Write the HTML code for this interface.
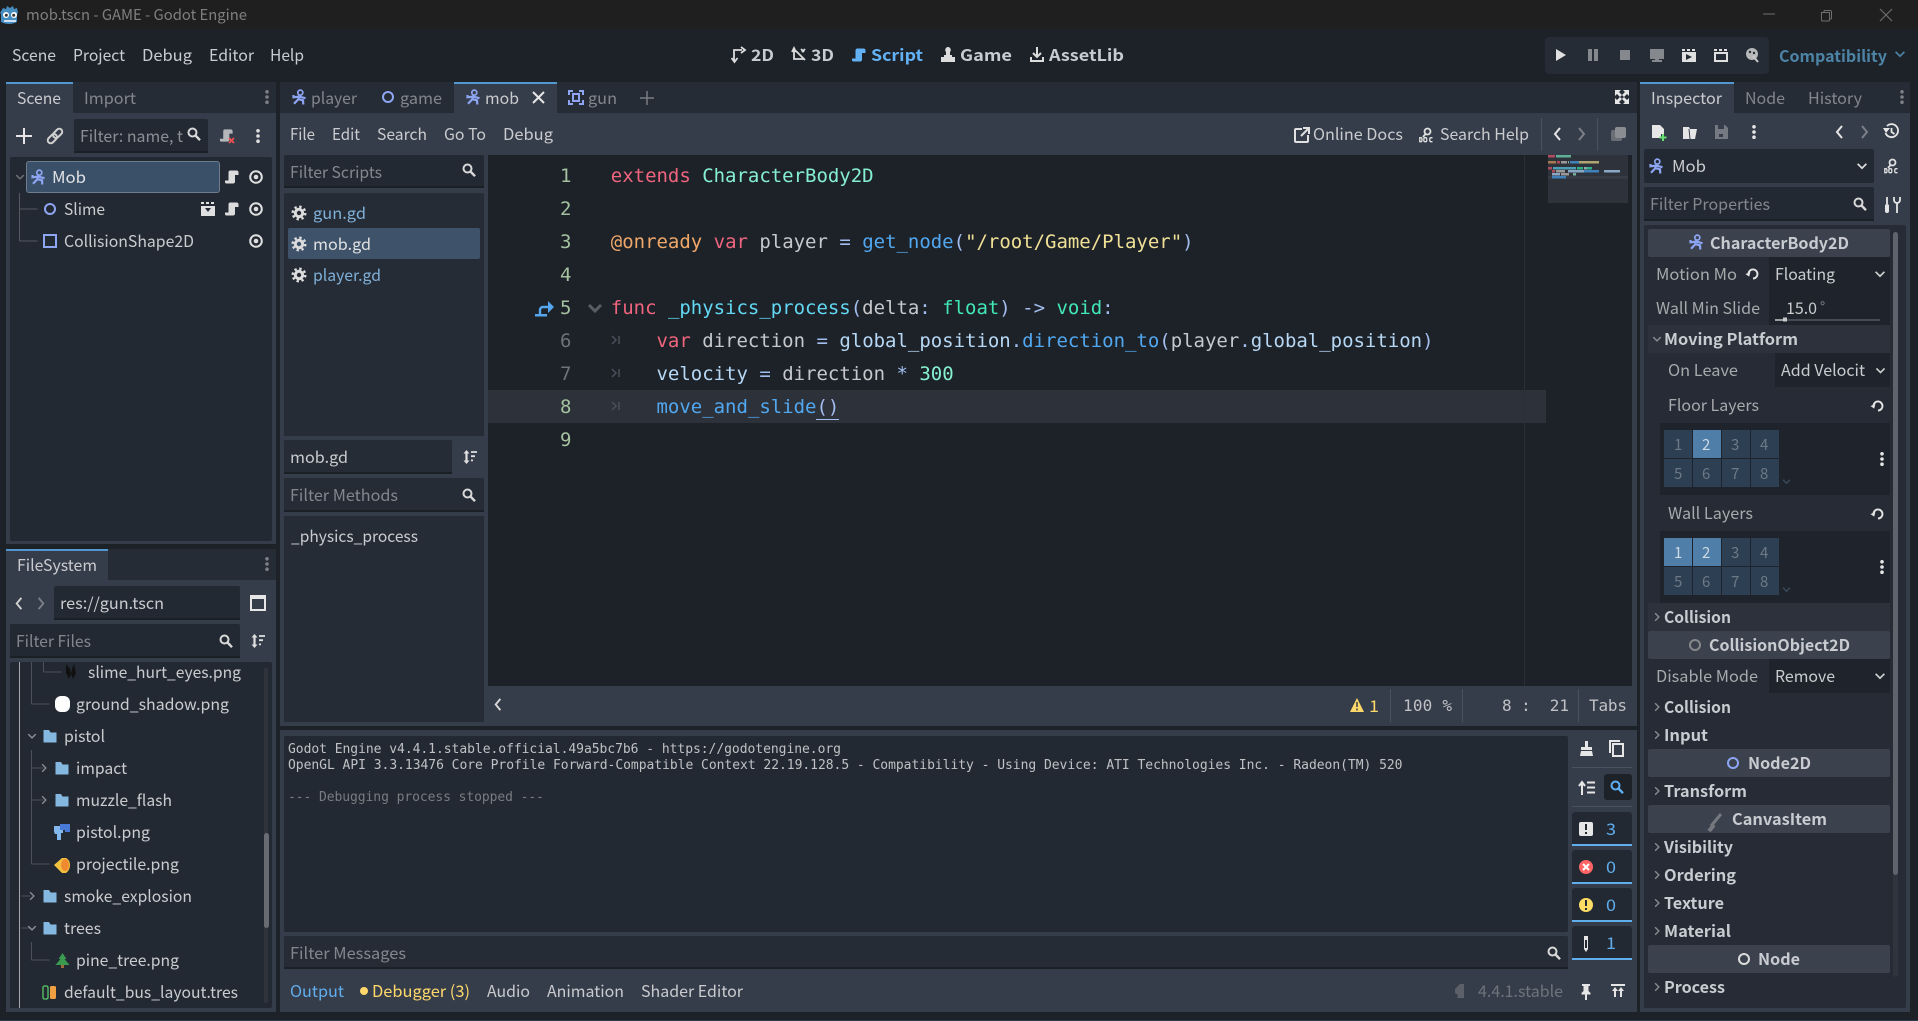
<!DOCTYPE html>
<html><head><meta charset="utf-8"><title>mob.tscn - GAME - Godot Engine</title>
<style>
html,body{margin:0;padding:0;background:#1d2229;overflow:hidden}
svg{display:block}
text{font-family:"Noto Sans CJK JP","Liberation Sans",sans-serif;font-size:16px;fill:#c9cbce;white-space:pre}
.d{fill:#83878d}.w{fill:#e0e1e3}
.b{font-weight:700;fill:#c8cbd0}
.m{font-family:"DejaVu Sans Mono","Liberation Mono",monospace}
.c{font-family:"DejaVu Sans Mono","Liberation Mono",monospace;font-size:19px;letter-spacing:-.015px}
.o{font-family:"DejaVu Sans Mono","Liberation Mono",monospace;font-size:13px;fill:#bfc1c4}
.n{font-family:"DejaVu Sans Mono","Liberation Mono",monospace;font-size:19px;fill:#a5c2a0}
.k{fill:#f0657d}.t{fill:#85f0cf}.y{fill:#42e8b4}.s{fill:#a3bdee}.f{fill:#52a8f0}.g{fill:#f0e096}.p{fill:#c6c8cb}.v{fill:#b6d8f5}.u{fill:#62d8f2}
.l{font-size:15px;fill:#6d7986}.la{font-size:15px;fill:#d0dbe6}
</style></head><body>
<svg xmlns="http://www.w3.org/2000/svg" width="1918" height="1021" viewBox="0 0 1918 1021">
<defs>
<symbol id="ch" viewBox="0 0 16 16"><circle cx="9.300" cy="3.600" r="2.500" fill="none" stroke="#8da5f3" stroke-width="1.700"/><path d="M8 6.500L7.300 10.200 3 14.700M7.300 10.200L12 11.300 12.300 15.500M2.500 6v2.300L8 7.600 14.500 9.200" fill="none" stroke="#8da5f3" stroke-width="2.200"/></symbol>
<symbol id="sc" viewBox="0 0 16 16"><path fill="currentColor" d="M6 1.500h6.500a2 2 0 0 1 2 2V6h-3.500v6.500a2 2 0 0 1-2 2H2.500A1.500 1.500 0 0 1 1 13v-1.500h3.500V3.500A2 2 0 0 1 6 1.500z"/></symbol>
<symbol id="ey" viewBox="0 0 16 16"><circle cx="8" cy="8" r="5.800" fill="none" stroke="#e0e0e0" stroke-width="2"/><circle cx="8" cy="8" r="2.300" fill="#e0e0e0"/></symbol>
<symbol id="no" viewBox="0 0 16 16"><circle cx="8" cy="8" r="5" fill="none" stroke="currentColor" stroke-width="2"/></symbol>
<symbol id="gr" viewBox="0 0 16 16"><circle cx="8" cy="8" r="6.300" fill="none" stroke="#dcdcdc" stroke-width="2.400" stroke-dasharray="2.400 2.550"/><circle cx="8" cy="8" r="3.700" fill="none" stroke="#dcdcdc" stroke-width="3"/></symbol>
<symbol id="se" viewBox="0 0 16 16"><circle cx="6.500" cy="6.500" r="4" fill="none" stroke="#d8d8d8" stroke-width="2"/><path d="M9.500 9.500l4.500 4.700" stroke="#d8d8d8" stroke-width="2.400"/></symbol>
<symbol id="sb" viewBox="0 0 16 16"><circle cx="6.500" cy="6.500" r="4" fill="none" stroke="#5fb0f2" stroke-width="2"/><path d="M9.500 9.500l4.500 4.700" stroke="#5fb0f2" stroke-width="2.400"/></symbol>
<symbol id="dt" viewBox="0 0 16 16"><circle cx="8" cy="2.800" r="1.800" fill="currentColor"/><circle cx="8" cy="8" r="1.800" fill="currentColor"/><circle cx="8" cy="13.200" r="1.800" fill="currentColor"/></symbol>
<symbol id="cd" viewBox="0 0 16 16"><path d="M3 5.500l5 5 5-5" fill="none" stroke="currentColor" stroke-width="2"/></symbol>
<symbol id="cr" viewBox="0 0 16 16"><path d="M5.500 3l5 5-5 5" fill="none" stroke="currentColor" stroke-width="1.800"/></symbol>
<symbol id="al" viewBox="0 0 16 16"><path d="M10 2L5 8l5 6" fill="none" stroke="currentColor" stroke-width="2"/></symbol>
<symbol id="ar" viewBox="0 0 16 16"><path d="M6 2l5 6-5 6" fill="none" stroke="currentColor" stroke-width="2"/></symbol>
<symbol id="fo" viewBox="0 0 16 16"><path fill="#84b8e0" d="M1.500 2h5.500l1.500 2.500h6V14.500h-13z"/></symbol>
<symbol id="re" viewBox="0 0 16 16"><path d="M3.700 8.500A4.800 4.800 0 1 1 8.500 13.300" fill="none" stroke="#e6e6e6" stroke-width="2"/><path fill="#e6e6e6" d="M.8 7.500h5.600L3.600 11.500z" transform="rotate(-20 3.600 9)"/></symbol>
<symbol id="so" viewBox="0 0 16 16"><path fill="#e0e0e0" d="M4.500 1L7.500 4.500H5.600v7h1.900L4.500 15 1.500 11.500h1.900v-7H1.500z"/><path stroke="#e0e0e0" stroke-width="1.800" d="M9 3h6M9 7.200h4M9 11.400h2"/></symbol>
<symbol id="dc" viewBox="0 0 16 16"><circle cx="8.500" cy="4.500" r="3" fill="none" stroke="#e0e0e0" stroke-width="1.800"/><path d="M6.500 7L4 10" stroke="#e0e0e0" stroke-width="1.800"/><path fill="none" stroke="#e0e0e0" stroke-width="1.300" d="M.8 10.700h1.200q1 0 1 2t-1 2H.8zM5.800 10.700h1q1 0 1 2t-1 2h-1q-1 0-1-2t1-2zM13.500 10.700h-1.500q-1.300 0-1.300 2t1.300 2h1.500"/></symbol>
</defs>

<!-- window -->
<rect width="1918" height="1021" fill="#1d2229"/>
<rect width="1918" height="29" fill="#1f1f1f"/>
<rect y="1020" width="1918" height="1" fill="#2d3b4f"/>
<g><path fill="#478cbf" d="M3 8l3 1 1-3 3 2 3-2 1 3 3-1 1 5-1 1v8q-8 4-16 0v-8l-1-1z"/><circle cx="6" cy="15" r="3" fill="#fff"/><circle cx="14" cy="15" r="3" fill="#fff"/><circle cx="6.300" cy="15.300" r="1.500" fill="#333"/><circle cx="13.700" cy="15.300" r="1.500" fill="#333"/><path d="M4 21h12" stroke="#fff" stroke-width="1.500"/></g>
<text x="26" y="20" style="font-size:15px;fill:#7f7f7f" textLength="221" lengthAdjust="spacingAndGlyphs">mob.tscn - GAME - Godot Engine</text>
<path d="M1763 14h12" stroke="#6f6f6f" stroke-width="1"/>
<path d="M1821.500 12.500h8v7.500a1 1 0 0 1-1 1h-6a1 1 0 0 1-1-1zM1824 12.500v-1a1 1 0 0 1 1-1h5a1.500 1.500 0 0 1 1.500 1.500v6a1 1 0 0 1-1 1h-1" fill="none" stroke="#6f6f6f"/>
<path d="M1880 9l12 12M1892 9l-12 12" stroke="#6f6f6f" stroke-width="1.100"/>

<!-- menu -->
<text x="12" y="61" textLength="44" lengthAdjust="spacingAndGlyphs">Scene</text>
<text x="73" y="61" textLength="52" lengthAdjust="spacingAndGlyphs">Project</text>
<text x="142" y="61" textLength="50" lengthAdjust="spacingAndGlyphs">Debug</text>
<text x="209" y="61" textLength="45" lengthAdjust="spacingAndGlyphs">Editor</text>
<text x="270" y="61" textLength="34" lengthAdjust="spacingAndGlyphs">Help</text>

<!-- main screens -->
<path d="M734 62V50h3M731.500 58l3 4 3-4M737 50l5 0M741 47l4 3-4 3" fill="none" stroke="#dcdcdc" stroke-width="1.800"/>
<text class="b" x="751" y="61" textLength="23" lengthAdjust="spacingAndGlyphs">2D</text>
<path d="M794 49v10h10M792 52l2-4 2 4M805 60l-9-9M801 49l3 3M805 49l-3 3" fill="none" stroke="#dcdcdc" stroke-width="1.800"/>
<text class="b" x="811" y="61" textLength="23" lengthAdjust="spacingAndGlyphs">3D</text>
<use href="#sc" x="851" y="47" width="16" height="16" color="#63b1f5"/>
<text class="b" x="871" y="61" textLength="52" lengthAdjust="spacingAndGlyphs" style="fill:#63b1f5">Script</text>
<path fill="#dcdcdc" d="M948 47a3 3 0 0 1 2 5v3h2v2h3v5h-14v-5h3v-2h2v-3a3 3 0 0 1 2-5z"/>
<text class="b" x="960" y="61" textLength="52" lengthAdjust="spacingAndGlyphs">Game</text>
<path d="M1037 47v10M1033 53l4 4 4-4M1031 57v4h12v-4" fill="none" stroke="#dcdcdc" stroke-width="2"/>
<text class="b" x="1049" y="61" textLength="75" lengthAdjust="spacingAndGlyphs">AssetLib</text>

<!-- run bar -->
<rect x="1545" y="37" width="224" height="37" rx="4" fill="#262c36"/>
<path fill="#e0e0e0" d="M1556 49l10 6-10 6z"/>
<path fill="#85888d" d="M1588 49h4v12h-4zM1594 49h4v12h-4z"/>
<rect x="1620" y="50" width="10" height="10" fill="#85888d"/>
<path fill="#85888d" d="M1650 49h14v10h-5v1h3v2h-10v-2h3v-1h-5z"/>
<path fill="#e0e0e0" d="M1682 52h14v10h-14zM1682 49h3v2h-3zM1687 49h3v2h-3zM1692 49h3v2h-3z"/><path fill="#262c36" d="M1686 54l6 3-6 3z"/>
<path fill="none" stroke="#e0e0e0" stroke-width="2" d="M1715 53h12v8h-12z"/><path fill="#e0e0e0" d="M1714 49h3v2h-3zM1719 49h3v2h-3zM1724 49h3v2h-3z"/>
<circle cx="1752" cy="54" r="6" fill="#b6b8ba"/><path d="M1753 56l5 6" stroke="#c8c8c8" stroke-width="2"/><circle cx="1750" cy="52" r="1.200" fill="#262c36"/><circle cx="1754" cy="53" r="1.200" fill="#262c36"/>
<text class="b" x="1779" y="62" textLength="108" lengthAdjust="spacingAndGlyphs" style="fill:#4d84a6">Compatibility</text>
<use href="#cd" x="1893" y="47" width="14" height="14" color="#4d84a6"/>

<!-- left dock scene -->
<rect x="6" y="82" width="270" height="31" fill="#262c36"/>
<rect x="6" y="82" width="67" height="31" fill="#363d4a"/>
<rect x="6" y="82" width="67" height="2" fill="#5397d0"/>
<text x="17" y="104" textLength="44" lengthAdjust="spacingAndGlyphs">Scene</text>
<text class="d" x="84" y="104" textLength="52" lengthAdjust="spacingAndGlyphs">Import</text>
<use href="#dt" x="259" y="89" width="16" height="16" color="#7c7f85"/>
<rect x="6" y="113" width="270" height="431" fill="#363d4a"/>
<path d="M24 128v16M16 136h16" stroke="#e6e6e6" stroke-width="2"/>
<g fill="none" stroke="#d0d0d0" stroke-width="2" transform="rotate(-45 55 136)"><rect x="46" y="133" width="10.500" height="6" rx="3"/><rect x="53.500" y="133" width="10.500" height="6" rx="3"/></g>
<rect x="74" y="119" width="134" height="34" rx="2" fill="#232933"/><rect x="74" y="151" width="134" height="2" fill="#1b2027"/>
<text class="d" x="80" y="142" textLength="103" lengthAdjust="spacingAndGlyphs" style="fill:#8b8f95">Filter: name, t</text>
<use href="#se" x="186" y="126" width="16" height="16"/>
<use href="#sc" x="219" y="128" width="15" height="15" color="#b4b6b9"/><path d="M229 138l5 5M234 138l-5 5" stroke="#f05050" stroke-width="1.800"/>
<use href="#dt" x="250" y="128" width="16" height="16" color="#e0e0e0"/>
<rect x="10" y="157" width="262" height="384" rx="2" fill="#232933"/>
<rect x="26.500" y="161.500" width="193" height="31" rx="2.500" fill="#3a5068" stroke="#6d7d8f"/>
<use href="#cd" x="14" y="171" width="12" height="12" color="#6f7377"/>
<use href="#ch" x="30" y="169" width="16" height="16"/>
<text class="w" x="52" y="183" textLength="34" lengthAdjust="spacingAndGlyphs">Mob</text>
<use href="#sc" x="224" y="169" width="16" height="16" color="#dcdcdc"/><use href="#ey" x="248" y="169" width="16" height="16"/>
<path d="M19.500 193v48M19.500 209h18M19.500 241h18" stroke="#55595f" fill="none"/>
<use href="#no" x="42" y="201" width="16" height="16" color="#8da5f3"/>
<text x="64" y="215" textLength="41" lengthAdjust="spacingAndGlyphs">Slime</text>
<path fill="#e0e0e0" d="M201 206h14v10h-14zM201 202h3v2h-3zM206 202h3v2h-3zM211 202h3v2h-3z"/><path fill="#232933" d="M205 208h6l-3 4z"/>
<use href="#sc" x="224" y="201" width="16" height="16" color="#dcdcdc"/><use href="#ey" x="248" y="201" width="16" height="16"/>
<rect x="44" y="235" width="12" height="12" fill="none" stroke="#8da5f3" stroke-width="2"/>
<text x="64" y="247" textLength="130" lengthAdjust="spacingAndGlyphs">CollisionShape2D</text>
<use href="#ey" x="248" y="233" width="16" height="16"/>

<!-- filesystem -->
<rect x="6" y="549" width="270" height="31" fill="#262c36"/>
<rect x="6" y="549" width="102" height="31" fill="#363d4a"/>
<rect x="6" y="549" width="102" height="2" fill="#5397d0"/>
<text x="17" y="571" textLength="80" lengthAdjust="spacingAndGlyphs">FileSystem</text>
<use href="#dt" x="259" y="556" width="16" height="16" color="#7c7f85"/>
<rect x="6" y="580" width="270" height="432" fill="#363d4a"/>
<use href="#al" x="12" y="596" width="15" height="15" color="#d0d0d0"/>
<use href="#ar" x="33" y="596" width="15" height="15" color="#7c7f85"/>
<rect x="54" y="586" width="186" height="34" rx="2" fill="#232933"/><rect x="54" y="618" width="186" height="2" fill="#1b2027"/>
<text x="60" y="609" textLength="104" lengthAdjust="spacingAndGlyphs">res://gun.tscn</text>
<rect x="251" y="596" width="14" height="14" fill="none" stroke="#e6e6e6" stroke-width="2"/><path d="M251 596h14v3h-14z" fill="#e6e6e6"/>
<rect x="10" y="624" width="230" height="34" rx="2" fill="#232933"/><rect x="10" y="656" width="230" height="2" fill="#1b2027"/>
<text class="d" x="16" y="647" textLength="75" lengthAdjust="spacingAndGlyphs">Filter Files</text>
<use href="#se" x="218" y="633" width="16" height="16"/>
<use href="#so" x="250" y="633" width="16" height="16"/>
<rect x="10" y="662" width="262" height="346" rx="2" fill="#232933"/>
<path d="M19.500 662v346" stroke="#a5a8ac"/>
<path d="M31.500 662v42M31.500 704h18M31.500 750v114M31.500 768h12M31.500 800h12M31.500 864h18M31.500 942v18M31.500 960h18M43.500 662v10M43.500 672h18M21 896h9M21 928h9" stroke="#4d5157" fill="none"/>
<path fill="#111" d="M66 664l4 5 1 5-2 5-3-6zM74 664l-2 5-1 5 2 5 3-6z"/>
<text x="88" y="678" textLength="153" lengthAdjust="spacingAndGlyphs">slime_hurt_eyes.png</text>
<g transform="translate(0 -1)">
<rect x="55" y="697" width="15" height="16" rx="6" fill="#fff"/>
<text x="76" y="711" textLength="153" lengthAdjust="spacingAndGlyphs">ground_shadow.png</text>
<use href="#cd" x="26" y="731" width="12" height="12" color="#8a8d91"/><use href="#fo" x="42" y="729" width="16" height="16"/>
<text x="64" y="743" textLength="41" lengthAdjust="spacingAndGlyphs">pistol</text>
<use href="#cr" x="38" y="763" width="12" height="12" color="#8a8d91"/><use href="#fo" x="54" y="761" width="16" height="16"/>
<text x="76" y="775" textLength="51" lengthAdjust="spacingAndGlyphs">impact</text>
<use href="#cr" x="38" y="795" width="12" height="12" color="#8a8d91"/><use href="#fo" x="54" y="793" width="16" height="16"/>
<text x="76" y="807" textLength="96" lengthAdjust="spacingAndGlyphs">muzzle_flash</text>
<path fill="#82b7ee" d="M54 827h9v7h-2v7h-4v-6h-2l-1-2z"/><path fill="#4a7ad8" d="M60 825h10v8h-5v-2h-5z"/>
<text x="76" y="839" textLength="74" lengthAdjust="spacingAndGlyphs">pistol.png</text>
<path fill="#f2c23e" d="M54 866l8-7h4q4 2 4 7t-4 8h-4z"/><ellipse cx="65" cy="866" rx="4" ry="6" fill="#f08a30"/>
<text x="76" y="871" textLength="103" lengthAdjust="spacingAndGlyphs">projectile.png</text>
<use href="#cr" x="26" y="891" width="12" height="12" color="#8a8d91"/><use href="#fo" x="42" y="889" width="16" height="16"/>
<text x="64" y="903" textLength="128" lengthAdjust="spacingAndGlyphs">smoke_explosion</text>
<use href="#cd" x="26" y="923" width="12" height="12" color="#8a8d91"/><use href="#fo" x="42" y="921" width="16" height="16"/>
<text x="64" y="935" textLength="37" lengthAdjust="spacingAndGlyphs">trees</text>
<path fill="#3a9a50" d="M62.500 954l4 6h-2l5 6h-14l5-6h-2z"/><rect x="61" y="966" width="3" height="3" fill="#a06a3a"/>
<text x="76" y="967" textLength="103" lengthAdjust="spacingAndGlyphs">pine_tree.png</text>
</g>
<rect x="43" y="986" width="5" height="13" rx="1.500" fill="none" stroke="#5ac86a" stroke-width="1.300"/><rect x="50" y="986" width="6" height="13" rx="1.500" fill="#f0a040"/>
<text x="64" y="998" textLength="174" lengthAdjust="spacingAndGlyphs">default_bus_layout.tres</text>
<rect x="264" y="668" width="4" height="335" rx="2" fill="#2e333c"/><rect x="264" y="833" width="5" height="95" rx="2.500" fill="#686c72"/>

<!-- centre tabs -->
<rect x="280" y="82" width="1357" height="31" fill="#262c36"/>
<use href="#ch" x="291" y="89" width="16" height="16"/>
<text class="d" x="311" y="104" textLength="46" lengthAdjust="spacingAndGlyphs">player</text>
<use href="#no" x="380" y="89" width="16" height="16" color="#8da5f3"/>
<text class="d" x="400" y="104" textLength="42" lengthAdjust="spacingAndGlyphs">game</text>
<rect x="454" y="82" width="103" height="31" fill="#363d4a"/><rect x="454" y="82" width="103" height="2" fill="#5397d0"/>
<use href="#ch" x="465" y="89" width="16" height="16"/>
<text x="485" y="104" textLength="34" lengthAdjust="spacingAndGlyphs">mob</text>
<path d="M533 92l11 11M544 92l-11 11" stroke="#e6e6e6" stroke-width="2"/>
<path d="M569 95v-4h4M579 91h4v4M583 100v4h-4M573 104h-4v-4" fill="none" stroke="#8da5f3" stroke-width="2"/><rect x="573" y="94" width="6" height="7" fill="none" stroke="#8da5f3" stroke-width="2"/>
<text class="d" x="588" y="104" textLength="29" lengthAdjust="spacingAndGlyphs">gun</text>
<path d="M647 91v14M640 98h14" stroke="#7a7d82" stroke-width="1.500"/>
<path fill="#e6e6e6" d="M1615 90h6l-2 2 3 3-2 2-3-3-2 2zM1629 90v6l-2-2-3 3-2-2 3-3-2-2zM1615 104v-6l2 2 3-3 2 2-3 3 2 2zM1629 104h-6l2-2-3-3 2-2 3 3 2-2z"/>

<!-- toolbar -->
<rect x="280" y="113" width="1357" height="42" fill="#363d4a"/>
<text x="290" y="140" textLength="25" lengthAdjust="spacingAndGlyphs">File</text>
<text x="332" y="140" textLength="28" lengthAdjust="spacingAndGlyphs">Edit</text>
<text x="377" y="140" textLength="50" lengthAdjust="spacingAndGlyphs">Search</text>
<text x="444" y="140" textLength="42" lengthAdjust="spacingAndGlyphs">Go To</text>
<text x="503" y="140" textLength="50" lengthAdjust="spacingAndGlyphs">Debug</text>
<path d="M1302 129h-6a1 1 0 0 0-1 1v11a1 1 0 0 0 1 1h11a1 1 0 0 0 1-1v-6M1301 136l7-7M1303 128h6v6" fill="none" stroke="#e0e0e0" stroke-width="2"/>
<text x="1313" y="140" textLength="90" lengthAdjust="spacingAndGlyphs">Online Docs</text>
<use href="#dc" x="1419" y="127" width="16" height="16"/>
<text x="1440" y="140" textLength="89" lengthAdjust="spacingAndGlyphs">Search Help</text>
<path d="M1541.500 118v33M1597.500 118v33" stroke="#4b525e"/>
<use href="#al" x="1550" y="126" width="16" height="16" color="#e6e6e6"/>
<use href="#ar" x="1573" y="126" width="16" height="16" color="#7c7f85"/>
<rect x="1611" y="130" width="11" height="11" rx="2" fill="#6a6e75"/><rect x="1615" y="127" width="11" height="11" rx="2" fill="#8a8d92"/>

<!-- script panel -->
<rect x="280" y="155" width="208" height="571" fill="#363d4a"/>
<rect x="284" y="155" width="200" height="33" rx="2" fill="#232933"/><rect x="284" y="186" width="200" height="2" fill="#1b2027"/>
<text class="d" x="290" y="178" textLength="92" lengthAdjust="spacingAndGlyphs">Filter Scripts</text>
<use href="#se" x="461" y="162" width="16" height="16"/>
<rect x="284" y="193" width="200" height="243" rx="2" fill="#262c36"/>
<rect x="288" y="228" width="192" height="31" rx="2" fill="#3e5369"/>
<use href="#gr" x="291" y="205" width="16" height="16"/>
<text x="313" y="219" textLength="53" lengthAdjust="spacingAndGlyphs" style="fill:#7fb0d8">gun.gd</text>
<use href="#gr" x="291" y="236" width="16" height="16"/>
<text class="w" x="313" y="250" textLength="58" lengthAdjust="spacingAndGlyphs">mob.gd</text>
<use href="#gr" x="291" y="267" width="16" height="16"/>
<text x="313" y="281" textLength="68" lengthAdjust="spacingAndGlyphs" style="fill:#7fb0d8">player.gd</text>
<rect x="284" y="440" width="168" height="34" rx="2" fill="#262c36"/><rect x="284" y="472" width="168" height="2" fill="#1b2027"/>
<text x="290" y="463" textLength="58" lengthAdjust="spacingAndGlyphs">mob.gd</text>
<use href="#so" x="462" y="449" width="16" height="16"/>
<rect x="284" y="478" width="200" height="34" rx="2" fill="#262c36"/><rect x="284" y="510" width="200" height="2" fill="#1b2027"/>
<text class="d" x="290" y="501" textLength="108" lengthAdjust="spacingAndGlyphs">Filter Methods</text>
<use href="#se" x="461" y="487" width="16" height="16"/>
<rect x="284" y="516" width="200" height="206" rx="2" fill="#262c36"/>
<text x="291" y="542" textLength="127" lengthAdjust="spacingAndGlyphs">_physics_process</text>

<!-- code -->
<rect x="488" y="155" width="1144" height="531" fill="#1d2229"/>
<rect x="1632" y="155" width="5" height="531" fill="#363d4a"/>
<rect x="488" y="390" width="1058" height="33" fill="#2d3139"/>
<path d="M1524.500 155v531" stroke="#2a2f37"/>
<rect x="1548" y="155" width="80" height="48" fill="#2e323a"/>
<g>
<rect x="1548" y="155" width="7" height="2.500" fill="#b04a5c"/><rect x="1556" y="155" width="15" height="2.500" fill="#5fae96"/>
<rect x="1548" y="161" width="8" height="2.500" fill="#a87a50"/><rect x="1557" y="161" width="3" height="2.500" fill="#b04a5c"/><rect x="1561" y="161" width="6" height="2.500" fill="#999"/><rect x="1568" y="161" width="1" height="2.500" fill="#8aa"/><rect x="1570" y="161" width="9" height="2.500" fill="#3f81bb"/><rect x="1579" y="161" width="20" height="2.500" fill="#b0a570"/>
<rect x="1548" y="167" width="4" height="2.500" fill="#b04a5c"/><rect x="1553" y="167" width="23" height="2.500" fill="#4c9fb5"/><rect x="1577" y="167" width="6" height="2.500" fill="#30b088"/><rect x="1584" y="167" width="3" height="2.500" fill="#8aa"/><rect x="1587" y="167" width="5" height="2.500" fill="#30b088"/>
<rect x="1552" y="170" width="3" height="2.500" fill="#b04a5c"/><rect x="1556" y="170" width="9" height="2.500" fill="#999"/><rect x="1568" y="170" width="16" height="2.500" fill="#8aa8c6"/><rect x="1584" y="170" width="15" height="2.500" fill="#3f81bb"/><rect x="1604" y="170" width="16" height="2.500" fill="#8aa8c6"/>
<rect x="1552" y="173" width="8" height="2.500" fill="#8aa8c6"/><rect x="1561" y="173" width="8" height="2.500" fill="#999"/><rect x="1573" y="173" width="3" height="2.500" fill="#74b09c"/>
<rect x="1548" y="176" width="80" height="2.500" fill="#383c44"/><rect x="1552" y="176" width="14" height="2.500" fill="#3f81bb"/>
</g>
<text class="n" x="560" y="182">1</text><text class="n" x="560" y="215">2</text><text class="n" x="560" y="248">3</text><text class="n" x="560" y="281">4</text><text class="n" x="560" y="314">5</text>
<text class="n" x="560" y="347" style="fill:#6e7175">6</text><text class="n" x="560" y="380" style="fill:#6e7175">7</text><text class="n" x="560" y="413">8</text><text class="n" x="560" y="446">9</text>
<text class="c" x="610.800" y="182"><tspan class="k">extends</tspan> <tspan class="t">CharacterBody2D</tspan></text>
<text class="c" x="610.800" y="248"><tspan style="fill:#f0a869">@onready</tspan> <tspan class="k">var</tspan> <tspan class="p">player</tspan> <tspan class="s">=</tspan> <tspan class="f">get_node</tspan><tspan class="s">(</tspan><tspan class="g">"/root/Game/Player"</tspan><tspan class="s">)</tspan></text>
<text class="c" x="610.800" y="314"><tspan class="k">func</tspan> <tspan class="u">_physics_process</tspan><tspan class="s">(</tspan><tspan class="p">delta</tspan><tspan class="s">:</tspan> <tspan class="y">float</tspan><tspan class="s">)</tspan> <tspan class="s">-&gt;</tspan> <tspan class="y">void</tspan><tspan class="s">:</tspan></text>
<text class="c" x="656.500" y="347"><tspan class="k">var</tspan> <tspan class="p">direction</tspan> <tspan class="s">=</tspan> <tspan class="v">global_position</tspan><tspan class="s">.</tspan><tspan class="f">direction_to</tspan><tspan class="s">(</tspan><tspan class="p">player</tspan><tspan class="s">.</tspan><tspan class="v">global_position</tspan><tspan class="s">)</tspan></text>
<text class="c" x="656.500" y="380"><tspan class="v">velocity</tspan> <tspan class="s">=</tspan> <tspan class="p">direction</tspan> <tspan class="s">*</tspan> <tspan class="t">300</tspan></text>
<text class="c" x="656.500" y="413"><tspan class="f">move_and_slide</tspan><tspan class="s">()</tspan></text>
<path d="M816 419.500h23" stroke="#a3bdee"/>
<path d="M612 336l4 4-4 4M619 336v8M612 369l4 4-4 4M619 369v8M612 402l4 4-4 4M619 402v8" fill="none" stroke="#4a505b" stroke-width="1.500"/>
<path fill="none" stroke="#55a6ee" stroke-width="2.400" d="M540 316v-6a3 3 0 0 1 3-3h7"/><path fill="#55a6ee" d="M548 301l6 6-6 6zM535 314h12v2.500h-12z"/>
<path d="M589 305l6 6 6-6" fill="none" stroke="#5a5d62" stroke-width="3"/>

<!-- status -->
<rect x="488" y="686" width="1149" height="40" fill="#363d4a"/>
<use href="#al" x="491" y="697" width="15" height="15" color="#d8d8d8"/>
<path fill="#ffd86b" d="M1357 698l7 14h-14z"/><path d="M1357 702v5M1357 708.500v2" stroke="#363d4a" stroke-width="1.500"/>
<text x="1369" y="712" textLength="10" lengthAdjust="spacingAndGlyphs" style="fill:#ffd86b">1</text>
<path d="M1390.500 689v33M1462.500 689v33M1578.500 689v33" stroke="#4b525e"/>
<text class="m" x="1403" y="711" textLength="49" style="font-size:16px;fill:#bfc1c4">100 %</text>
<text class="m" x="1502" y="711" textLength="67" style="font-size:16px;fill:#bfc1c4">8 :  21</text>
<text class="m" x="1589" y="711" textLength="38" style="font-size:16px;fill:#bfc1c4">Tabs</text>

<!-- debug panel -->
<rect x="280" y="730" width="1357" height="282" fill="#363d4a"/>
<rect x="284" y="736" width="1284" height="196" rx="2" fill="#232933"/>
<text class="o" x="288" y="753" textLength="553">Godot Engine v4.4.1.stable.official.49a5bc7b6 - https://godotengine.org</text>
<text class="o" x="288" y="769" textLength="1114.500">OpenGL API 3.3.13476 Core Profile Forward-Compatible Context 22.19.128.5 - Compatibility - Using Device: ATI Technologies Inc. - Radeon(TM) 520</text>
<text class="o" x="288" y="801" textLength="256" style="fill:#797c80">--- Debugging process stopped ---</text>
<rect x="284" y="936" width="1284" height="33" rx="2" fill="#262c36"/><rect x="284" y="967" width="1284" height="2" fill="#1b2027"/>
<text class="d" x="290" y="959" textLength="116" lengthAdjust="spacingAndGlyphs">Filter Messages</text>
<use href="#se" x="1546" y="945" width="16" height="16"/>
<path fill="#e6e6e6" d="M1585 741h3v6h-3zM1581 747h11v3h-11zM1581 751h11l1 5h-13z"/>
<path d="M1613 744h10v12h-10zM1610 753v-12h10" fill="none" stroke="#e6e6e6" stroke-width="2"/>
<path d="M1572 767.500h60M1572 806.500h60" stroke="#4b525e"/>
<path d="M1582 783v12M1579 786l3-4 3 4M1587 782.500h8M1587 787.500h8M1587 792.500h8" stroke="#e6e6e6" stroke-width="2" fill="none"/>
<rect x="1604" y="774" width="28" height="26" rx="3" fill="#1d2229"/><use href="#sb" x="1609" y="779" width="16" height="16"/>
<g>
<rect x="1572" y="812" width="60" height="34" rx="3" fill="#232933"/><rect x="1572" y="844" width="60" height="2" fill="#60aeee"/>
<rect x="1572" y="850" width="60" height="34" rx="3" fill="#232933"/><rect x="1572" y="882" width="60" height="2" fill="#60aeee"/>
<rect x="1572" y="888" width="60" height="34" rx="3" fill="#232933"/><rect x="1572" y="920" width="60" height="2" fill="#60aeee"/>
<rect x="1572" y="926" width="60" height="34" rx="3" fill="#232933"/><rect x="1572" y="958" width="60" height="2" fill="#60aeee"/>
</g>
<rect x="1579" y="822" width="14" height="14" rx="2" fill="#e6e6e6"/><path d="M1586 824v6M1586 832v2" stroke="#232933" stroke-width="2"/>
<circle cx="1586" cy="867" r="7" fill="#ff6464"/><path d="M1583 864l6 6M1589 864l-6 6" stroke="#fff" stroke-width="2"/>
<circle cx="1586" cy="905" r="7" fill="#ffdd65"/><path d="M1586 900v6M1586 908v2" stroke="#232933" stroke-width="2"/>
<path fill="#e6e6e6" d="M1584 936h4v13l-2 3-2-3z"/><rect x="1585" y="940" width="2" height="8" fill="#232933"/>
<text x="1606" y="835" textLength="10" lengthAdjust="spacingAndGlyphs" style="fill:#60aeee">3</text>
<text x="1606" y="873" textLength="10" lengthAdjust="spacingAndGlyphs" style="fill:#60aeee">0</text>
<text x="1606" y="911" textLength="10" lengthAdjust="spacingAndGlyphs" style="fill:#60aeee">0</text>
<text x="1606" y="949" textLength="10" lengthAdjust="spacingAndGlyphs" style="fill:#60aeee">1</text>
<text x="290" y="997" textLength="54" lengthAdjust="spacingAndGlyphs" style="fill:#60aeee">Output</text>
<circle cx="364" cy="991" r="4" fill="#ffd86b"/>
<text x="372" y="997" textLength="98" lengthAdjust="spacingAndGlyphs" style="fill:#ffd86b">Debugger (3)</text>
<text x="487" y="997" textLength="43" lengthAdjust="spacingAndGlyphs">Audio</text>
<text x="547" y="997" textLength="77" lengthAdjust="spacingAndGlyphs">Animation</text>
<text x="641" y="997" textLength="102" lengthAdjust="spacingAndGlyphs">Shader Editor</text>
<path fill="#5c6068" d="M1455 989l5-5h4v14h-7l1-3-3-2z"/>
<text class="d" x="1478" y="997" textLength="85" lengthAdjust="spacingAndGlyphs" style="fill:#6f747b">4.4.1.stable</text>
<path fill="#e6e6e6" d="M1582 984h8v2h-1.500v5l2 2v1.500h-3.500V1000h-2v-5.500h-3.500V993l2-2v-5H1582z"/>
<path fill="#e6e6e6" d="M1611 984h14v2h-14zM1615 987l3 4h-2v6h-2v-6h-2zM1621 987l3 4h-2v6h-2v-6h-2z"/>

<!-- inspector -->
<rect x="1640" y="82" width="270" height="31" fill="#262c36"/>
<rect x="1640" y="82" width="94" height="31" fill="#363d4a"/><rect x="1640" y="82" width="94" height="2" fill="#5397d0"/>
<text x="1651" y="104" textLength="71" lengthAdjust="spacingAndGlyphs">Inspector</text>
<text class="d" x="1745" y="104" textLength="40" lengthAdjust="spacingAndGlyphs">Node</text>
<text class="d" x="1808" y="104" textLength="54" lengthAdjust="spacingAndGlyphs">History</text>
<use href="#dt" x="1894" y="89" width="16" height="16" color="#7c7f85"/>
<rect x="1640" y="113" width="270" height="899" fill="#363d4a"/>
<path fill="#e6e6e6" d="M1652 125h8l4 4v5h-3v4h-9z"/><path d="M1663 134v7M1659.500 137.500h7" stroke="#66e070" stroke-width="2"/>
<path fill="#e6e6e6" d="M1683 127h6l1 2v10h-7zM1690 129h7l-2 10h-5z"/><path d="M1689 129l1 10" stroke="#363d4a"/>
<path fill="#757a82" d="M1715 125h10l3 3v11h-13z"/><rect x="1718" y="125" width="6" height="4" fill="#363d4a"/><rect x="1719" y="134" width="4" height="3" fill="#363d4a"/>
<use href="#dt" x="1746" y="124" width="16" height="16" color="#e6e6e6"/>
<use href="#al" x="1832" y="124" width="16" height="16" color="#e6e6e6"/>
<use href="#ar" x="1856" y="124" width="16" height="16" color="#7c7f85"/>
<path d="M1887 126a6.500 6.500 0 1 1-1.500 7M1891.500 128v4l3 2" fill="none" stroke="#e6e6e6" stroke-width="1.800"/><path fill="#e6e6e6" d="M1883 128h7l-4 5z"/>
<rect x="1644" y="149" width="230" height="34" rx="2" fill="#232933"/>
<use href="#ch" x="1648" y="158" width="16" height="16"/>
<text x="1672" y="172" textLength="34" lengthAdjust="spacingAndGlyphs">Mob</text>
<use href="#cd" x="1855" y="159" width="14" height="14" color="#e0e0e0"/>
<use href="#dc" x="1884" y="158" width="16" height="16"/>
<rect x="1644" y="187" width="230" height="34" rx="2" fill="#232933"/><rect x="1644" y="219" width="230" height="2" fill="#1b2027"/>
<text class="d" x="1650" y="210" textLength="120" lengthAdjust="spacingAndGlyphs">Filter Properties</text>
<use href="#se" x="1852" y="196" width="16" height="16"/>
<path d="M1887 197v7M1897 203v10M1894 197v3a3 3 0 0 0 6 0v-3" stroke="#e6e6e6" stroke-width="1.800" fill="none"/><rect x="1885" y="204" width="4" height="9" rx="2" fill="#e6e6e6"/>
<rect x="1644" y="225" width="262" height="783" rx="2" fill="#262b35"/>
<rect x="1893" y="232" width="5" height="745" rx="2.500" fill="#2f343d"/><rect x="1893" y="232" width="5" height="643" rx="2.500" fill="#5f636b"/>

<rect x="1648" y="229" width="242" height="28" rx="2" fill="#3c424d"/>
<use href="#ch" x="1688" y="234" width="16" height="16"/>
<text class="b" x="1710" y="249" textLength="139" lengthAdjust="spacingAndGlyphs">CharacterBody2D</text>
<text class="d" x="1656" y="280" textLength="81" lengthAdjust="spacingAndGlyphs" style="fill:#a7a9ac">Motion Mo</text>
<use href="#re" x="1745" y="266" width="15" height="15"/>
<rect x="1769" y="257" width="121" height="68" fill="#1f242c"/>
<text x="1775" y="280" textLength="60" lengthAdjust="spacingAndGlyphs">Floating</text>
<use href="#cd" x="1873" y="267" width="14" height="14" color="#d0d0d0"/>
<text class="d" x="1656" y="314" textLength="104" lengthAdjust="spacingAndGlyphs" style="fill:#a7a9ac">Wall Min Slide</text>
<text x="1786" y="314" textLength="31" lengthAdjust="spacingAndGlyphs">15.0</text>
<text class="d" x="1820" y="312" style="font-size:14px">°</text>
<rect x="1775" y="319" width="105" height="2" fill="#464b53"/><rect x="1775" y="319" width="10" height="2" fill="#9a9da2"/><rect x="1783" y="317.500" width="4" height="4" fill="#c8c8c8"/>

<rect x="1648" y="325" width="242" height="28" fill="#2c313b"/>
<use href="#cd" x="1651" y="333" width="12" height="12" color="#8a8d91"/>
<text class="b" x="1664" y="345" textLength="134" lengthAdjust="spacingAndGlyphs">Moving Platform</text>
<text x="1668" y="376" textLength="70" lengthAdjust="spacingAndGlyphs" style="fill:#a7a9ac">On Leave</text>
<rect x="1775" y="353" width="115" height="34" fill="#1f242c"/>
<text x="1781" y="376" textLength="84" lengthAdjust="spacingAndGlyphs">Add Velocit</text>
<use href="#cd" x="1874" y="364" width="13" height="13" color="#d0d0d0"/>
<text x="1668" y="411" textLength="91" lengthAdjust="spacingAndGlyphs" style="fill:#a7a9ac">Floor Layers</text>
<use href="#re" x="1870" y="398" width="15" height="15"/>
<rect x="1660" y="423" width="230" height="72" fill="#1f242c"/>
<g fill="#2d3f52">
<rect x="1664" y="430" width="28" height="28"/><rect x="1722" y="430" width="28" height="28"/><rect x="1751" y="430" width="28" height="28"/>
<rect x="1664" y="459" width="28" height="28"/><rect x="1693" y="459" width="28" height="28"/><rect x="1722" y="459" width="28" height="28"/><rect x="1751" y="459" width="28" height="28"/>
</g>
<g fill="#4f7ea8"><rect x="1693" y="430" width="28" height="28"/></g>
<text class="l" x="1674" y="450">1</text><text class="la" x="1702" y="450">2</text><text class="l" x="1731" y="450">3</text><text class="l" x="1760" y="450">4</text>
<text class="l" x="1674" y="479">5</text><text class="l" x="1702" y="479">6</text><text class="l" x="1731" y="479">7</text><text class="l" x="1760" y="479">8</text>
<use href="#dt" x="1874" y="451" width="16" height="16" color="#e6e6e6"/>
<use href="#cd" x="1781" y="476" width="11" height="11" color="#3b4a5c"/>
<rect x="1648" y="495" width="242" height="36" fill="#262b35"/>
<text x="1668" y="519" textLength="85" lengthAdjust="spacingAndGlyphs" style="fill:#a7a9ac">Wall Layers</text>
<use href="#re" x="1870" y="506" width="15" height="15"/>
<rect x="1660" y="531" width="230" height="72" fill="#1f242c"/>
<g fill="#2d3f52">
<rect x="1722" y="538" width="28" height="28"/><rect x="1751" y="538" width="28" height="28"/>
<rect x="1664" y="567" width="28" height="28"/><rect x="1693" y="567" width="28" height="28"/><rect x="1722" y="567" width="28" height="28"/><rect x="1751" y="567" width="28" height="28"/>
</g>
<g fill="#4f7ea8"><rect x="1664" y="538" width="28" height="28"/><rect x="1693" y="538" width="28" height="28"/></g>
<text class="la" x="1674" y="558">1</text><text class="la" x="1702" y="558">2</text><text class="l" x="1731" y="558">3</text><text class="l" x="1760" y="558">4</text>
<text class="l" x="1674" y="587">5</text><text class="l" x="1702" y="587">6</text><text class="l" x="1731" y="587">7</text><text class="l" x="1760" y="587">8</text>
<use href="#dt" x="1874" y="559" width="16" height="16" color="#e6e6e6"/>
<use href="#cd" x="1781" y="584" width="11" height="11" color="#3b4a5c"/>

<rect x="1648" y="603" width="242" height="28" fill="#2c313b"/>
<use href="#cr" x="1651" y="611" width="12" height="12" color="#8a8d91"/>
<text class="b" x="1664" y="623" textLength="67" lengthAdjust="spacingAndGlyphs">Collision</text>
<rect x="1648" y="631" width="242" height="28" rx="2" fill="#3c424d"/>
<use href="#no" x="1687" y="637" width="16" height="16" color="#85878b"/>
<text class="b" x="1709" y="651" textLength="141" lengthAdjust="spacingAndGlyphs">CollisionObject2D</text>
<text x="1656" y="682" textLength="102" lengthAdjust="spacingAndGlyphs" style="fill:#a7a9ac">Disable Mode</text>
<rect x="1769" y="659" width="121" height="34" fill="#1f242c"/>
<text x="1775" y="682" textLength="60" lengthAdjust="spacingAndGlyphs">Remove</text>
<use href="#cd" x="1873" y="669" width="14" height="14" color="#d0d0d0"/>

<use href="#cr" x="1651" y="701" width="12" height="12" color="#8a8d91"/><text class="b" x="1664" y="713" textLength="67" lengthAdjust="spacingAndGlyphs">Collision</text>
<use href="#cr" x="1651" y="729" width="12" height="12" color="#8a8d91"/><text class="b" x="1664" y="741" textLength="44" lengthAdjust="spacingAndGlyphs">Input</text>
<rect x="1648" y="749" width="242" height="28" rx="2" fill="#3c424d"/>
<use href="#no" x="1725" y="755" width="16" height="16" color="#8da5f3"/>
<text class="b" x="1748" y="769" textLength="63" lengthAdjust="spacingAndGlyphs">Node2D</text>
<use href="#cr" x="1651" y="785" width="12" height="12" color="#8a8d91"/><text class="b" x="1664" y="797" textLength="83" lengthAdjust="spacingAndGlyphs">Transform</text>
<rect x="1648" y="805" width="242" height="28" rx="2" fill="#3c424d"/>
<path d="M1711 826l10-12" stroke="#75787d" stroke-width="3"/><path d="M1709 831l5-6" stroke="#75787d" stroke-width="4"/>
<text class="b" x="1732" y="825" textLength="95" lengthAdjust="spacingAndGlyphs">CanvasItem</text>
<use href="#cr" x="1651" y="841" width="12" height="12" color="#8a8d91"/><text class="b" x="1664" y="853" textLength="69" lengthAdjust="spacingAndGlyphs">Visibility</text>
<use href="#cr" x="1651" y="869" width="12" height="12" color="#8a8d91"/><text class="b" x="1664" y="881" textLength="72" lengthAdjust="spacingAndGlyphs">Ordering</text>
<use href="#cr" x="1651" y="897" width="12" height="12" color="#8a8d91"/><text class="b" x="1664" y="909" textLength="60" lengthAdjust="spacingAndGlyphs">Texture</text>
<use href="#cr" x="1651" y="925" width="12" height="12" color="#8a8d91"/><text class="b" x="1664" y="937" textLength="67" lengthAdjust="spacingAndGlyphs">Material</text>
<rect x="1648" y="945" width="242" height="28" rx="2" fill="#3c424d"/>
<use href="#no" x="1736" y="951" width="16" height="16" color="#dcdcdc"/>
<text class="b" x="1758" y="965" textLength="42" lengthAdjust="spacingAndGlyphs">Node</text>
<use href="#cr" x="1651" y="981" width="12" height="12" color="#8a8d91"/><text class="b" x="1664" y="993" textLength="61" lengthAdjust="spacingAndGlyphs">Process</text>
</svg>
</body></html>
